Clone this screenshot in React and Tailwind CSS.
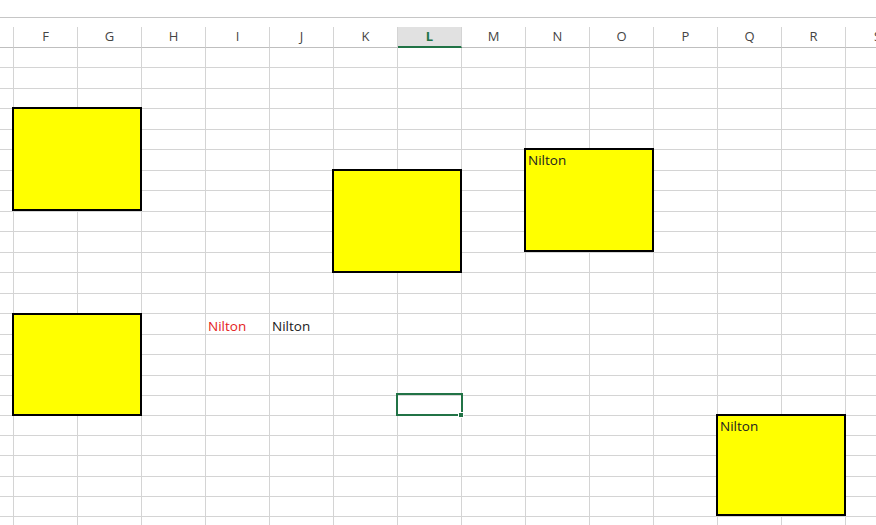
import React from "react";

const COLS = ["E", "F", "G", "H", "I", "J", "K", "L", "M", "N", "O", "P", "Q", "R", "S"];
const ROW_H = [20, 21, 20, 21, 20, 21, 20, 21, 20, 21, 20, 21, 20, 21, 20, 21, 20, 20, 20, 20, 21, 20, 20, 20];

const cellText = {
  "13-I": { text: "Nilton", color: "text-[#e41b1b]" },
  "13-J": { text: "Nilton", color: "text-[#1a1a1a]" },
};

function Shape({ className, text }) {
  return (
    <div
      className={`absolute box-border border-2 border-black bg-[#ffff00] pt-[2px] pl-[2px] text-[13.5px] leading-[17px] text-[#222] ${className}`}
    >
      {text}
    </div>
  );
}

export default function App() {
  return (
    <div
      className="relative w-[876px] h-[525px] overflow-hidden bg-white"
      style={{ fontFamily: '"Open Sans", "Liberation Sans", sans-serif' }}
    >
      <div className="h-[17px]" />
      <div className="h-px bg-[#c6c6c6]" />
      <div className="h-[9px]" />
      {/* column header */}
      <div className="flex h-[21px]">
        {COLS.map((c, i) => {
          const sel = c === "L";
          return (
            <div
              key={c}
              className={`box-border shrink-0 flex items-center justify-center border-r border-[#d4d4d4] text-[13px] ${
                i === 0 ? "w-[14px]" : "w-[64px]"
              } ${
                sel
                  ? "bg-[#e1e1e1] border-b-2 border-b-[#217346] text-[#217346] font-bold"
                  : "border-b border-b-[#bfbfbf] text-[#444]"
              }`}
            >
              {i === 0 ? "" : c}
            </div>
          );
        })}
      </div>
      {/* grid */}
      {ROW_H.map((h, r) => (
        <div key={r} className="flex" style={{ height: h }}>
          {COLS.map((c, i) => {
            const t = cellText[`${r}-${c}`];
            return (
              <div
                key={c}
                className={`box-border shrink-0 flex items-end border-r border-b border-[#d4d4d4] pl-[2px] text-[13.5px] leading-[16px] whitespace-nowrap ${
                  i === 0 ? "w-[14px]" : "w-[64px]"
                } ${t ? t.color : ""}`}
              >
                {t ? t.text : ""}
              </div>
            );
          })}
        </div>
      ))}

      {/* shapes */}
      <Shape className="left-[12px] top-[107px] w-[130px] h-[104px]" />
      <Shape className="left-[332px] top-[169px] w-[130px] h-[104px]" />
      <Shape className="left-[524px] top-[148px] w-[130px] h-[104px]" text="Nilton" />
      <Shape className="left-[12px] top-[313px] w-[130px] h-[103px]" />
      <Shape className="left-[716px] top-[414px] w-[130px] h-[102px]" text="Nilton" />

      {/* selected cell */}
      <div className="absolute left-[396px] top-[393px] w-[67px] h-[23px] box-border border-2 border-[#217346]" />
      <div className="absolute left-[458px] top-[412px] w-[6px] h-[6px] bg-[#217346] border border-white box-border" />
    </div>
  );
}
